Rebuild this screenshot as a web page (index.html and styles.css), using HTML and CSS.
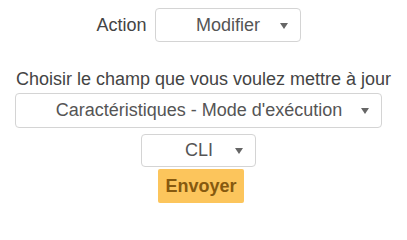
FILE: index.html
```html
<!DOCTYPE html>
<html lang="fr">
<head>
<meta charset="utf-8">
<title>Modifier</title>
<link rel="stylesheet" href="styles.css">
</head>
<body>
<form class="form">
  <div class="row action-row">
    <span class="label">Action</span>
    <div class="select select-action"><span class="spacer"></span><span class="value">Modifier</span><span class="arrow"></span></div>
  </div>
  <p class="hint">Choisir le champ que vous voulez mettre à jour</p>
  <div class="select select-field"><span class="spacer"></span><span class="value">Caractéristiques - Mode d'exécution</span><span class="arrow"></span></div>
  <div class="select select-mode"><span class="spacer"></span><span class="value">CLI</span><span class="arrow"></span></div>
  <button type="button" class="submit">Envoyer</button>
</form>
</body>
</html>
```
FILE: styles.css
```css
html, body {
  margin: 0;
  padding: 0;
  background: #ffffff;
}
body {
  font-family: "Liberation Sans", Arial, sans-serif;
  font-size: 18px;
  color: #444444;
}
.form {
  display: flex;
  flex-direction: column;
  align-items: center;
  padding-top: 8px;
}
.row {
  display: flex;
  align-items: center;
}
.action-row {
  gap: 8px;
  margin-right: 10px;
}
.label {
  color: #444444;
  line-height: 21px;
}
.select {
  box-sizing: border-box;
  display: flex;
  align-items: center;
  border: 1px solid #d4d4d4;
  border-radius: 4px;
  background: #ffffff;
  padding: 0 12px;
  color: #555555;
  line-height: 21px;
}
.select .value {
  flex: 1;
  text-align: center;
  white-space: nowrap;
}
.select .spacer {
  width: 9px;
  flex: none;
}
.select .arrow {
  flex: none;
  width: 0;
  height: 0;
  border-left: 4.5px solid transparent;
  border-right: 4.5px solid transparent;
  border-top: 6px solid #666666;
  margin-top: 1px;
}
.select-action {
  width: 146px;
  height: 34px;
}
.hint {
  margin: 27px 0 0 0;
  line-height: 21px;
  color: #444444;
}
.select-field {
  width: 367px;
  height: 35px;
  margin-top: 3px;
  margin-right: 10px;
}
.select-mode {
  width: 115px;
  height: 33px;
  margin-top: 6px;
  margin-right: 10px;
}
.submit {
  margin-top: 2px;
  margin-right: 5px;
  width: 86px;
  height: 34px;
  border: none;
  border-radius: 2px;
  background: #fcc55c;
  color: #86590f;
  font-family: "Liberation Sans", Arial, sans-serif;
  font-size: 18px;
  font-weight: bold;
  padding: 0;
}
```
